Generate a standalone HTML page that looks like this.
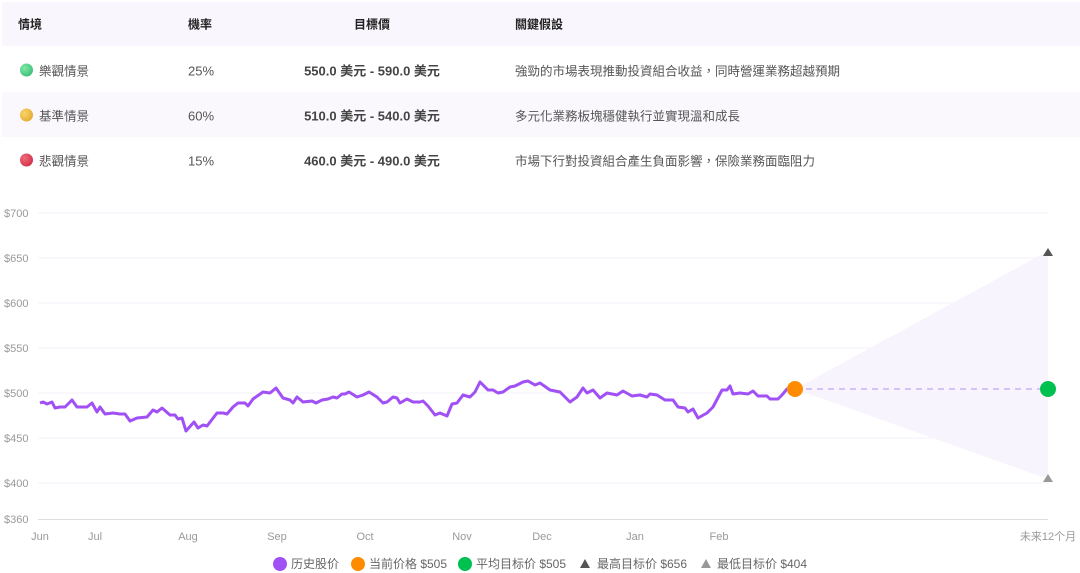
<!DOCTYPE html>
<html><head><meta charset="utf-8"><style>
body{margin:0;width:1080px;height:573px;background:#fff;font-family:"Liberation Sans","Noto Sans CJK TC",sans-serif;position:relative;overflow:hidden}
.row{position:absolute;left:2px;width:1078px;height:45px;font-size:12.5px;color:#555}
.row span{position:absolute;top:50%;transform:translateY(-50%);white-space:nowrap}
.hd{background:#f9f7fd;color:#222;font-weight:bold;font-size:12px}
.alt{background:#faf8fd}
.dot{width:13px;height:13px;border-radius:50%;left:18px}
.c1{left:37px}.c2{left:186px;font-size:13px;margin-top:1px}.c3{left:370px;transform:translate(-50%,-50%)!important;font-weight:bold;color:#444;font-size:13px}.c4{left:513px}
</style></head><body>
<div class="row hd" style="top:2px;height:44px"><span style="left:16px">情境</span><span class="c2" style="font-size:12px;margin:0">機率</span><span class="c3" style="color:#222;font-size:12px">目標價</span><span class="c4">關鍵假設</span></div>
<div class="row" style="top:47px"><span class="dot" style="background:radial-gradient(circle at 35% 35%,#7ee8a6,#2bb36a)"></span><span class="c1">樂觀情景</span><span class="c2">25%</span><span class="c3">550.0 美元 - 590.0 美元</span><span class="c4">強勁的市場表現推動投資組合收益，同時營運業務超越預期</span></div>
<div class="row alt" style="top:92px"><span class="dot" style="background:radial-gradient(circle at 35% 35%,#f8d56a,#e0a020)"></span><span class="c1">基準情景</span><span class="c2">60%</span><span class="c3">510.0 美元 - 540.0 美元</span><span class="c4">多元化業務板塊穩健執行並實現溫和成長</span></div>
<div class="row" style="top:137px"><span class="dot" style="background:radial-gradient(circle at 35% 35%,#f06a7a,#c8203a)"></span><span class="c1">悲觀情景</span><span class="c2">15%</span><span class="c3">460.0 美元 - 490.0 美元</span><span class="c4">市場下行對投資組合產生負面影響，保險業務面臨阻力</span></div>
<svg width="1080" height="573" style="position:absolute;left:0;top:0" font-family="Liberation Sans,Noto Sans CJK SC,sans-serif">
<g stroke="#f3f1fa" stroke-width="1">
<line x1="38" x2="1048" y1="213" y2="213"/><line x1="38" x2="1048" y1="258" y2="258"/><line x1="38" x2="1048" y1="303" y2="303"/><line x1="38" x2="1048" y1="348" y2="348"/><line x1="38" x2="1048" y1="393" y2="393"/><line x1="38" x2="1048" y1="438" y2="438"/><line x1="38" x2="1048" y1="483" y2="483"/>
</g>
<line x1="38" x2="1048" y1="519.5" y2="519.5" stroke="#ddd"/>
<g fill="#999" font-size="11">
<text x="4" y="217">$700</text><text x="4" y="262">$650</text><text x="4" y="307">$600</text><text x="4" y="352">$550</text><text x="4" y="397">$500</text><text x="4" y="442">$450</text><text x="4" y="487">$400</text><text x="4" y="523">$360</text>
<g text-anchor="middle"><text x="40" y="540">Jun</text><text x="95" y="540">Jul</text><text x="188" y="540">Aug</text><text x="277" y="540">Sep</text><text x="365" y="540">Oct</text><text x="462" y="540">Nov</text><text x="542" y="540">Dec</text><text x="635" y="540">Jan</text><text x="719" y="540">Feb</text><text x="1048" y="540">未来12个月</text></g>
</g>
<polygon points="795,389 1048,251 1048,479" fill="#f7f4fd"/>
<line x1="795" y1="389" x2="1048" y2="389" stroke="#d5c2f7" stroke-width="2" stroke-dasharray="6,5"/>
<polyline fill="none" stroke="#a050f5" stroke-width="3" stroke-linejoin="round" points="40,403 43,402 47,404 52,402 55,408 60,407 65,407 72,400 77,407 87,407 92,403 97,412 100,407 105,414 113,413 120,414 125,414 130,421 137,418 147,417 153,410 157,412 162,408 170,415 175,415 178,419 182,418 186,431 194,422 198,428 203,425 207,426 217,413 223,413 227,414 233,407 238,403 245,403 248,406 253,399 263,392 270,393 276,388 283,398 290,400 293,403 297,397 303,402 312,401 316,403 322,400 328,399 333,397 337,398 342,394 345,394 349,392 357,397 363,395 369,392 377,397 383,403 387,402 393,397 397,398 400,403 407,399 413,402 420,402 423,401 428,406 435,415 440,413 447,416 452,404 457,403 463,395 470,397 475,392 480,382 488,390 493,390 498,393 503,392 510,387 515,386 523,382 528,381 535,385 540,383 550,390 560,392 570,402 577,397 583,388 587,393 593,390 600,398 607,393 617,395 623,391 632,396 640,395 647,397 650,394 657,395 665,400 673,400 678,407 685,408 688,412 693,409 698,418 707,413 713,407 722,390 727,390 730,386 733,394 740,393 748,394 753,391 758,396 767,396 770,399 778,399 782,395 787,389 792,388"/>
<circle cx="795" cy="389" r="8" fill="#ff8c00"/>
<circle cx="1048" cy="389" r="8" fill="#00c050"/>
<polygon points="1048,248 1053,256 1043,256" fill="#555"/>
<polygon points="1048,474 1053,482 1043,482" fill="#999"/>
<g font-size="12" fill="#666">
<circle cx="280" cy="564" r="7" fill="#a050f5"/><text x="291" y="568">历史股价</text>
<circle cx="358" cy="564" r="7" fill="#ff8c00"/><text x="369" y="568">当前价格 $505</text>
<circle cx="465" cy="564" r="7" fill="#00c050"/><text x="476" y="568">平均目标价 $505</text>
<polygon points="585,559 590,568 580,568" fill="#555"/><text x="597" y="568">最高目标价 $656</text>
<polygon points="706,559 711,568 701,568" fill="#999"/><text x="717" y="568">最低目标价 $404</text>
</g>
</svg>
</body></html>
